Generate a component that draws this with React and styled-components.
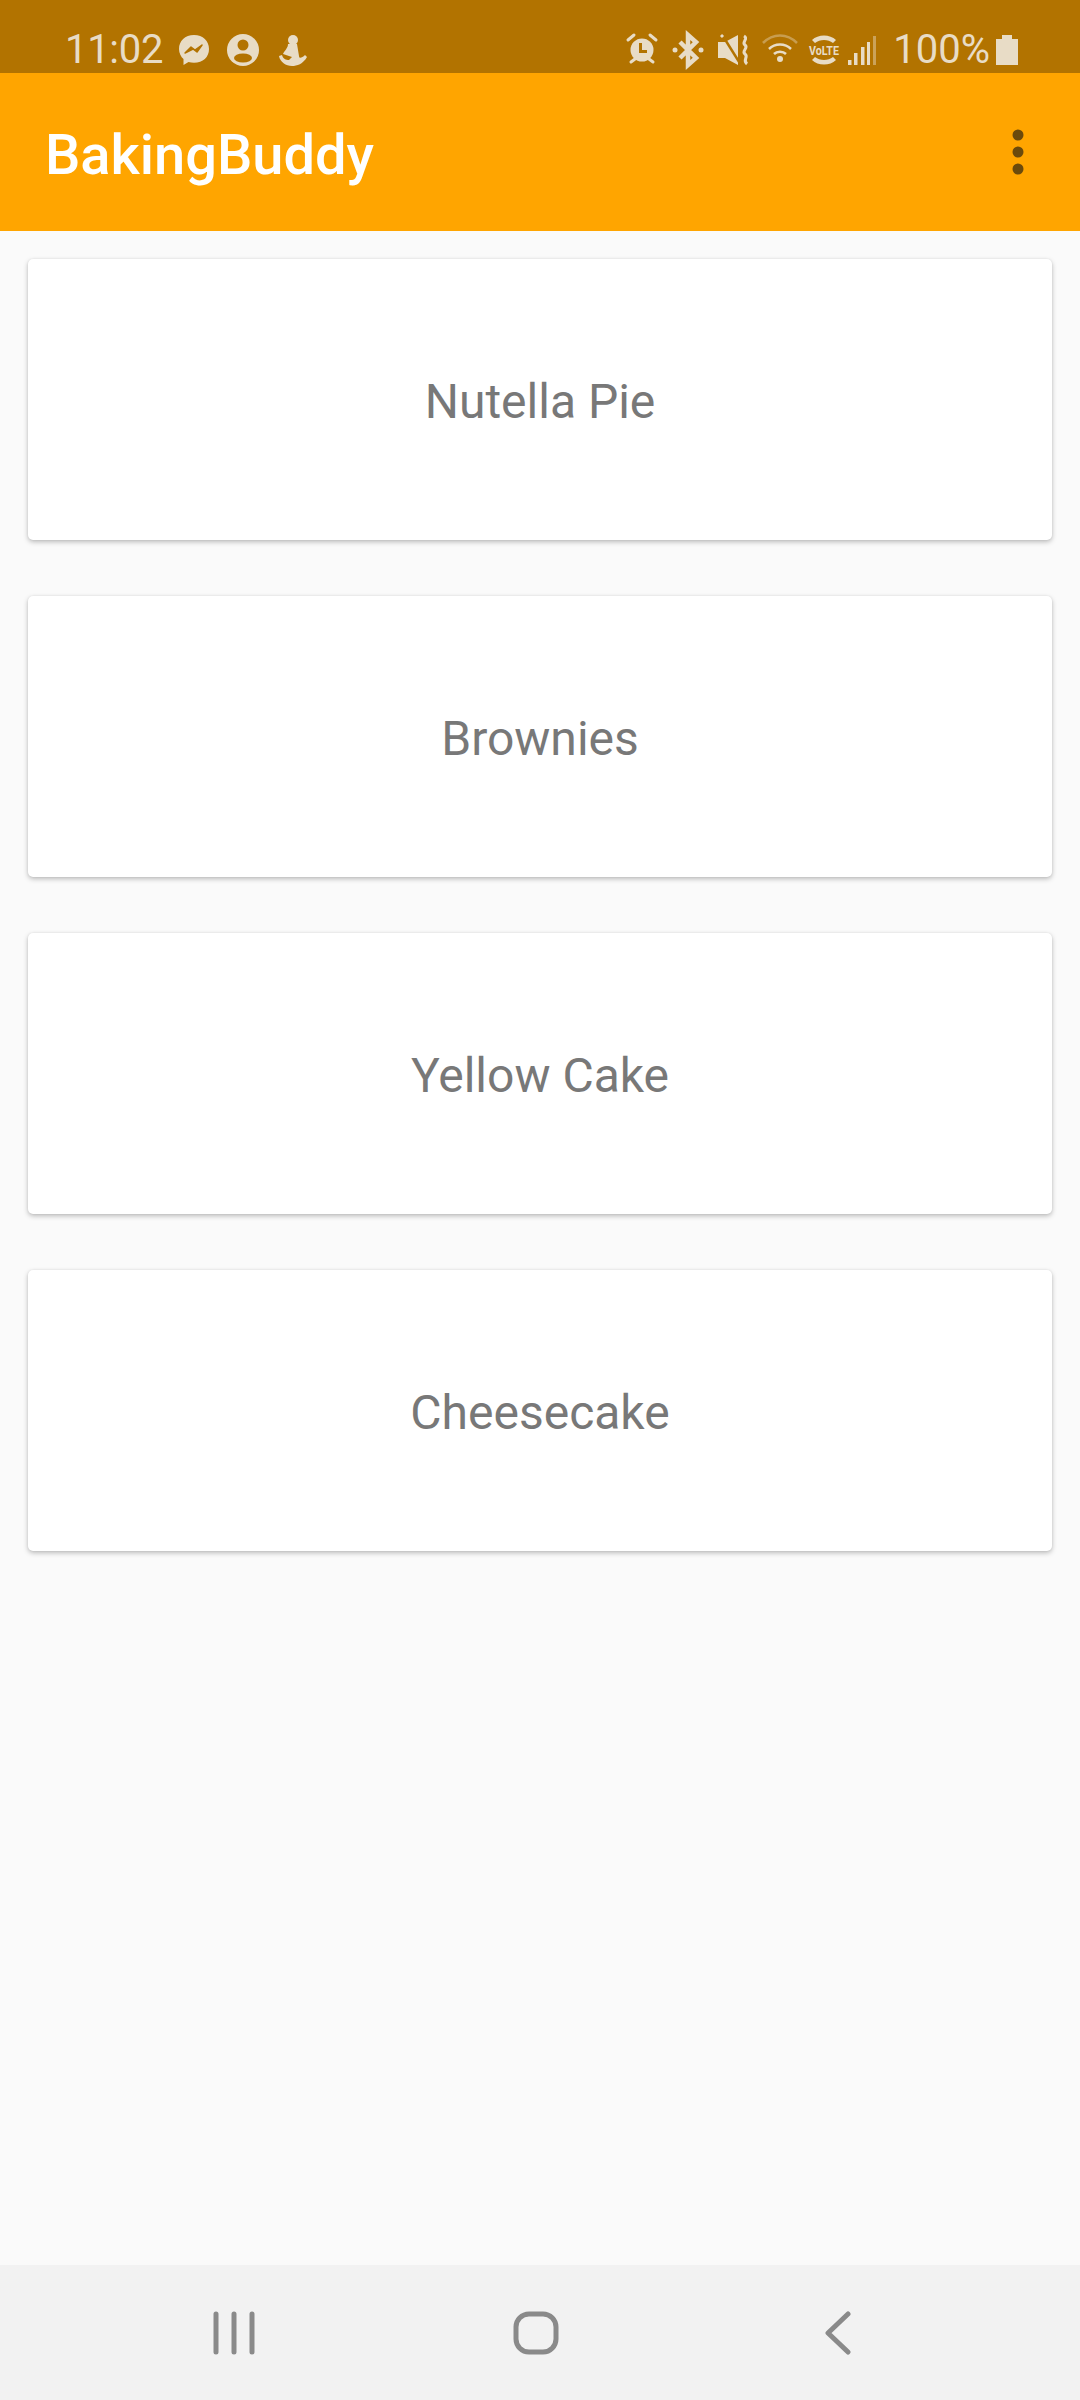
import React from "react";
import styled, { createGlobalStyle } from "styled-components";

const Global = createGlobalStyle`
  html, body { margin: 0; padding: 0; background: #fafafa; }
  body { font-family: Roboto, "Liberation Sans", sans-serif; }
  * { box-sizing: border-box; }
`;
const Page = styled.div`
  width: 1080px; height: 2400px; display: flex; flex-direction: column;
  background: #fafafa; overflow: hidden;
`;
const StatusBar = styled.div`
  height: 73px; flex: none; background: #b27300; color: #e8dcc6;
  display: flex; justify-content: space-between; align-items: center;
  padding: 26px 62px 0 65px;
`;
const StatusGroup = styled.div`display: flex; align-items: center;`;
const Time = styled.span`font-size: 40px; line-height: 40px; width: 94px; margin-right: 11px; letter-spacing: -0.3px;`;
const Percent = styled.span`font-size: 40px; line-height: 40px; margin: 0 6px 0 12px;`;
const StatusIcon = styled.svg.attrs(p => ({
  width: p.$w, height: 40, viewBox: `${-p.$w / 2} -20 ${p.$w} 40`,
}))`
  display: block; flex: none; fill: currentColor;
`;
const AppBar = styled.header`
  height: 158px; flex: none; background: #ffa500; display: flex;
  align-items: center; justify-content: space-between; padding: 0 56px 0 45px;
`;
const Title = styled.h1`
  margin: 0; color: #fff; font-size: 56px; font-weight: 500; line-height: 1; padding-top: 6px;
`;
const Overflow = styled.svg`display: block; fill: #6b4a0c;`;
const List = styled.main`
  flex: 1; display: flex; flex-direction: column; gap: 56px; padding: 28px 28px;
`;
const Card = styled.div`
  height: 281px; flex: none; background: #fff; border-radius: 5px;
  box-shadow: 0 2px 5px rgba(0,0,0,.25), 0 0 2px rgba(0,0,0,.08);
  display: flex; align-items: center; justify-content: center;
  color: #787878; font-size: 48px; padding-top: 3px;
`;
const NavBar = styled.nav`
  height: 135px; flex: none; background: #f2f2f2;
  display: flex; align-items: center;
`;
const NavSlot = styled.div`
  display: flex; justify-content: center; width: ${p => p.$w}px;
`;
const NavIcon = styled.svg`display: block; stroke: #8a8a8a; fill: none; stroke-linecap: round; stroke-linejoin: round;`;

const BG = "#b27300";
const Messenger = () => (
  <StatusIcon $w={48}>
    <path d="M0-15C-9-15-15-9-15-1c0 4 2 8 4.500 10V15l5-3c1.800.5 3.600.8 5.500.8C9 12.800 15 7 15-1 15-9 9-15 0-15z" />
    <path d="M-9 3-3-3 1 0 8-5 3 2-1-1z" fill={BG} stroke={BG} strokeWidth="1.500" strokeLinejoin="round" />
  </StatusIcon>
);
const Avatar = () => (
  <StatusIcon $w={50}>
    <circle r="16" />
    <circle cy="-5" r="5.500" fill={BG} />
    <ellipse cy="8" rx="9" ry="4.500" fill={BG} />
  </StatusIcon>
);
const Seated = () => (
  <StatusIcon $w={50}>
    <circle cy="-10" r="5" />
    <path d="M-5-6H4L6 6C6 9 9 8 12 5L14 7C10 14 4 16-1 16-7 16-13 12-14 6L-11 5C-10 9-7 10-4 10L-1 7-10 4C-8 0-5-2-5-6z" />
  </StatusIcon>
);
const Alarm = () => (
  <StatusIcon $w={46}>
    <circle r="11.500" />
    <path d="M-3-7H0V0H5V3H-3z" fill={BG} />
    <path d="M-14-10-8-15M14-10 8-15M-11 12-7 9M11 12 7 9" stroke="currentColor" strokeWidth="3" strokeLinecap="round" />
  </StatusIcon>
);
const Bluetooth = () => (
  <StatusIcon $w={46}>
    <path d="M-8-8 8 8 0 15V-15L8-8-8 8" fill="none" stroke="currentColor" strokeWidth="4.500" />
    <circle cx="-13" r="2.500" />
    <circle cx="13" r="2.500" />
  </StatusIcon>
);
const Mute = () => (
  <StatusIcon $w={46}>
    <path d="M-16-8H-9L4-15V15L-9 8H-16z" />
    <path d="M-13-17 7 15" stroke={BG} strokeWidth="2.500" />
    <path d="M-13-15-11-13" stroke="currentColor" strokeWidth="3" />
    <path d="M10-14C15-11 7-8 11-5 15-2 7 1 11 4 15 7 8 10 13 14" fill="none" stroke="currentColor" strokeWidth="3" />
  </StatusIcon>
);
const Wifi = () => (
  <StatusIcon $w={46}>
    <path d="M-17-7C-7-17 7-17 17-7" fill="none" stroke="currentColor" strokeOpacity=".4" strokeWidth="2.500" />
    <path d="M-11-1C-5-7 5-7 11-1" fill="none" stroke="currentColor" strokeWidth="2.500" />
    <path d="M-6 4C-3 1 3 1 6 4" fill="none" stroke="currentColor" strokeWidth="2.500" />
    <circle cy="9" r="3" />
  </StatusIcon>
);
const Volte = () => (
  <StatusIcon $w={42}>
    <path d="M-12-10C-6-16 6-16 12-10L9-7C4-11-4-11-9-7z" />
    <path d="M-12 10C-6 16 6 16 12 10L9 7C4 11-4 11-9 7z" />
    <text x="0" y="4.500" textAnchor="middle" fontFamily="Roboto, sans-serif" fontWeight="700" fontSize="12.500" textLength="30" lengthAdjust="spacingAndGlyphs">VoLTE</text>
  </StatusIcon>
);
const Signal = () => (
  <StatusIcon $w={36}>
    <rect x="-15" y="10" width="3.500" height="5" />
    <rect x="-9" y="3" width="3.500" height="12" />
    <rect x="-2" y="-3" width="3.500" height="18" />
    <rect x="4" y="-8" width="3" height="23" />
    <rect x="10" y="-14" width="3" height="29" opacity=".45" />
  </StatusIcon>
);
const Battery = () => (
  <StatusIcon $w={22}>
    <path d="M-11-11H-5V-15H5V-11H11V15H-11z" />
  </StatusIcon>
);

const recipes = ["Nutella Pie", "Brownies", "Yellow Cake", "Cheesecake"];

export default function App() {
  return (
    <Page>
      <Global />
      <StatusBar>
        <StatusGroup>
          <Time>11:02</Time>
          <Messenger />
          <Avatar />
          <Seated />
        </StatusGroup>
        <StatusGroup>
          <Alarm />
          <Bluetooth />
          <Mute />
          <Wifi />
          <Volte />
          <Signal />
          <Percent>100%</Percent>
          <Battery />
        </StatusGroup>
      </StatusBar>
      <AppBar>
        <Title>BakingBuddy</Title>
        <Overflow width="12" height="46" viewBox="0 0 12 46">
          <circle cx="6" cy="6" r="5.500" />
          <circle cx="6" cy="23" r="5.500" />
          <circle cx="6" cy="40" r="5.500" />
        </Overflow>
      </AppBar>
      <List>
        {recipes.map(r => <Card key={r}>{r}</Card>)}
      </List>
      <NavBar>
        <NavSlot $w={468}>
          <NavIcon width="46" height="44" viewBox="0 0 46 44" strokeWidth="5">
            <path d="M5 3V41M23 3V41M41 3V41" />
          </NavIcon>
        </NavSlot>
        <NavSlot $w={136}>
          <NavIcon width="46" height="44" viewBox="0 0 46 44" strokeWidth="5">
            <rect x="3" y="3" width="40" height="38" rx="13" />
          </NavIcon>
        </NavSlot>
        <NavSlot $w={468}>
          <NavIcon width="28" height="44" viewBox="0 0 28 44" strokeWidth="5">
            <path d="M24 3 4 22 24 41" />
          </NavIcon>
        </NavSlot>
      </NavBar>
    </Page>
  );
}
